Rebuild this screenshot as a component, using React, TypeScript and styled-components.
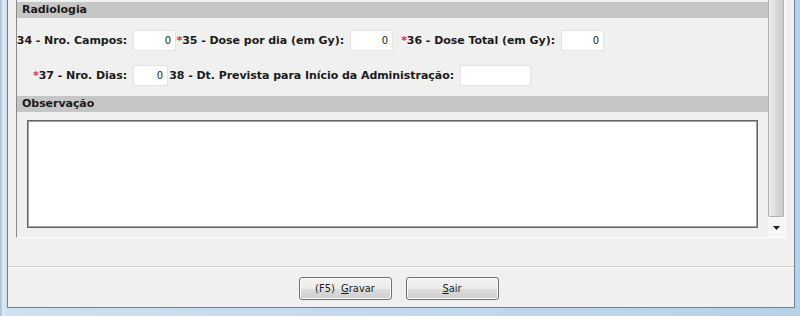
import React from 'react'
import styled, { createGlobalStyle } from 'styled-components'

const GlobalStyle = createGlobalStyle`
  html, body {
    margin: 0;
    padding: 0;
  }
  body {
    width: 800px;
    height: 316px;
    overflow: hidden;
    font-family: "DejaVu Sans", Verdana, sans-serif;
    color: #1b1b1b;
  }
`

const Frame = styled.div`
  width: 800px;
  height: 316px;
  box-sizing: border-box;
  padding: 0 5px 8px 7px;
  background: linear-gradient(to right, #9fbcd6 0px, #dfeaf4 3px, #cfe0ef 7px, #b7d1e8 100%);
`

const Client = styled.div`
  height: 100%;
  box-sizing: border-box;
  border: 1px solid #6f8397;
  border-top: none;
  background: #f0f0f0;
  display: flex;
  flex-direction: column;
`

const PanelWrap = styled.div`
  padding: 0 8px;
`

const Panel = styled.div`
  height: 238px;
  box-sizing: border-box;
  border-left: 1px solid #8a8a8a;
  border-right: 1px solid #ffffff;
  border-bottom: 1px solid #ffffff;
  display: flex;
`

const Content = styled.div`
  flex: 1;
  overflow: hidden;
  padding-top: 2px;
  display: flex;
  flex-direction: column;
`

const SectionHeader = styled.div<{ $top?: number }>`
  height: 16px;
  margin-top: ${(p) => p.$top ?? 0}px;
  background: #c6c6c6;
  padding-left: 5px;
  font-size: 11px;
  font-weight: bold;
  line-height: 16px;
  letter-spacing: -0.05px;
`

const Row = styled.div<{ $top: number }>`
  display: flex;
  align-items: center;
  height: 21px;
  margin-top: ${(p) => p.$top}px;
`

const Label = styled.div<{ $w: number; $ml?: number }>`
  flex: none;
  width: ${(p) => p.$w}px;
  margin-left: ${(p) => p.$ml ?? 0}px;
  margin-right: 6px;
  display: flex;
  justify-content: flex-end;
  overflow: hidden;
  white-space: nowrap;
  font-size: 11px;
  font-weight: bold;
  letter-spacing: -0.05px;

  span {
    flex: none;
  }
`

const Req = styled.span`
  color: #e0323a;
`

const Field = styled.input<{ $w: number }>`
  flex: none;
  width: ${(p) => p.$w}px;
  height: 21px;
  box-sizing: border-box;
  margin: 0;
  border: 1px solid #e4e4e4;
  background: #ffffff;
  padding: 0 4px 0 0;
  text-align: right;
  font-family: "DejaVu Sans Condensed", "DejaVu Sans", sans-serif;
  font-size: 11px;
  color: #1b1b1b;
  outline: none;
`

const Notes = styled.textarea`
  margin: 8px 10px 0;
  height: 108px;
  box-sizing: border-box;
  border: 1px solid #646464;
  box-shadow: inset 0 0 0 1px #a3a3a3;
  background: #ffffff;
  resize: none;
  outline: none;
`

const Scrollbar = styled.div`
  flex: none;
  width: 17px;
  background: #f6f6f6;
  display: flex;
  flex-direction: column;
`

const Thumb = styled.div`
  flex: 1;
  margin: 0 1px 0 0;
  border: 1px solid #b3b3b3;
  border-top: none;
  border-radius: 0 0 2px 2px;
  background: linear-gradient(to right, #ebebeb 0%, #e4e4e4 35%, #d9d9d9 50%, #cbcbcb 100%);
`

const ArrowButton = styled.div`
  height: 19px;
  margin-top: 1px;
  display: flex;
  align-items: center;
  justify-content: center;
`

const Separator = styled.div`
  margin-top: 28px;
  height: 1px;
  background: #cfcfcf;
  border-bottom: 1px solid #fafafa;
`

const ButtonBar = styled.div`
  display: flex;
  justify-content: center;
  gap: 14px;
  margin-top: 9px;
  padding-right: 5px;
`

const Button = styled.button`
  width: 93px;
  height: 23px;
  box-sizing: border-box;
  border: 1px solid #707070;
  border-radius: 3px;
  background: linear-gradient(#f3f3f3 0%, #ebebeb 50%, #dddddd 50%, #cfcfcf 100%);
  box-shadow: inset 0 0 0 1px #fbfbfb;
  font-family: "DejaVu Sans Condensed", "DejaVu Sans", sans-serif;
  font-size: 11px;
  color: #1b1b1b;
  padding: 0;
  white-space: pre;
`

const App: React.FC = () => (
  <>
    <GlobalStyle />
    <Frame>
      <Client>
        <PanelWrap>
          <Panel>
            <Content>
              <SectionHeader>Radiologia</SectionHeader>
              <Row $top={12}>
                <Label $w={110}>
                  <span>34 - Nro. Campos:</span>
                </Label>
                <Field $w={43} readOnly defaultValue="0" />
                <Label $w={168} $ml={0}>
                  <span>
                    <Req>*</Req>35 - Dose por dia (em Gy):
                  </span>
                </Label>
                <Field $w={43} readOnly defaultValue="0" />
                <Label $w={154} $ml={8}>
                  <span>
                    <Req>*</Req>36 - Dose Total (em Gy):
                  </span>
                </Label>
                <Field $w={43} readOnly defaultValue="0" />
              </Row>
              <Row $top={14}>
                <Label $w={110}>
                  <span>
                    <Req>*</Req>37 - Nro. Dias:
                  </span>
                </Label>
                <Field $w={35} readOnly defaultValue="0" />
                <Label $w={285} $ml={1}>
                  <span>
                    <Req>*</Req>38 - Dt. Prevista para Início da Administração:
                  </span>
                </Label>
                <Field $w={71} readOnly defaultValue="" />
              </Row>
              <SectionHeader $top={10}>Observação</SectionHeader>
              <Notes readOnly />
            </Content>
            <Scrollbar>
              <Thumb />
              <ArrowButton>
                <svg width="7" height="4" viewBox="0 0 7 4">
                  <polygon points="0,0 7,0 3.5,4" fill="#1f1f1f" />
                </svg>
              </ArrowButton>
            </Scrollbar>
          </Panel>
        </PanelWrap>
        <Separator />
        <ButtonBar>
          <Button>
            (F5)  <u>G</u>ravar
          </Button>
          <Button>
            <u>S</u>air
          </Button>
        </ButtonBar>
      </Client>
    </Frame>
  </>
)

export default App
